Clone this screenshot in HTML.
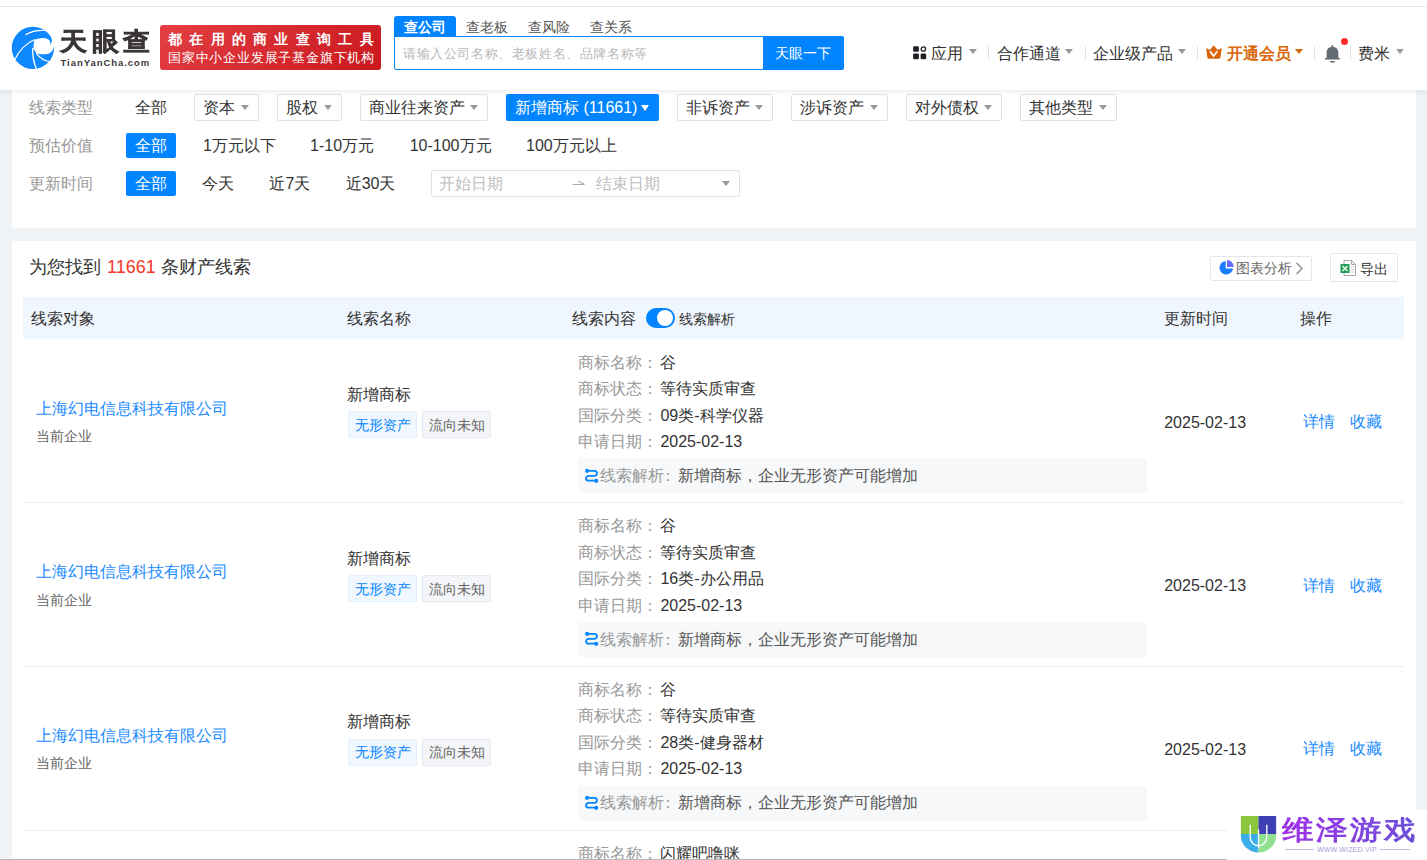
<!DOCTYPE html>
<html><head><meta charset="utf-8"><style>
html,body{margin:0;padding:0;width:1427px;height:860px;overflow:hidden;background:#eff3f6;font-family:"Liberation Sans",sans-serif}
.t{position:absolute;white-space:nowrap}
.r{position:absolute}
</style></head><body>
<div class="r" style="left:0px;top:0px;width:1427px;height:860px;background:#eff3f6"></div>
<div class="r" style="left:12px;top:0px;width:1404px;height:228px;background:#fff"></div>
<div class="r" style="left:12px;top:241px;width:1404px;height:619px;background:#fff"></div>
<div class="t" style="left:28.6px;top:100.3px;font-size:16px;line-height:16px;color:#999;font-weight:normal;">线索类型</div>
<div class="t" style="left:28.6px;top:138.3px;font-size:16px;line-height:16px;color:#999;font-weight:normal;">预估价值</div>
<div class="t" style="left:28.6px;top:176.3px;font-size:16px;line-height:16px;color:#999;font-weight:normal;">更新时间</div>
<div class="t" style="left:134.6px;top:100.3px;font-size:16px;line-height:16px;color:#333;font-weight:normal;">全部</div>
<div class="r" style="left:194px;top:94px;width:65px;height:27px;border:1px solid #dfe3e8;border-radius:2px;box-sizing:border-box;background:#fff"></div>
<div class="t" style="left:203.0px;top:100.3px;font-size:16px;line-height:16px;color:#333;font-weight:normal;">资本</div>
<div class="r" style="left:240.5px;top:105px;width:0;height:0;border-left:4.0px solid transparent;border-right:4.0px solid transparent;border-top:5px solid #999"></div>
<div class="r" style="left:277px;top:94px;width:65px;height:27px;border:1px solid #dfe3e8;border-radius:2px;box-sizing:border-box;background:#fff"></div>
<div class="t" style="left:286.0px;top:100.3px;font-size:16px;line-height:16px;color:#333;font-weight:normal;">股权</div>
<div class="r" style="left:323.5px;top:105px;width:0;height:0;border-left:4.0px solid transparent;border-right:4.0px solid transparent;border-top:5px solid #999"></div>
<div class="r" style="left:360px;top:94px;width:128px;height:27px;border:1px solid #dfe3e8;border-radius:2px;box-sizing:border-box;background:#fff"></div>
<div class="t" style="left:369.0px;top:100.3px;font-size:16px;line-height:16px;color:#333;font-weight:normal;">商业往来资产</div>
<div class="r" style="left:469.5px;top:105px;width:0;height:0;border-left:4.0px solid transparent;border-right:4.0px solid transparent;border-top:5px solid #999"></div>
<div class="r" style="left:506px;top:94px;width:153px;height:27px;background:#0084ff;border-radius:2px"></div>
<div class="t" style="left:515.0px;top:100.3px;font-size:16px;line-height:16px;color:#fff;font-weight:normal;">新增商标 (11661)</div>
<div class="r" style="left:641px;top:105px;width:0;height:0;border-left:4.5px solid transparent;border-right:4.5px solid transparent;border-top:6px solid #fff"></div>
<div class="r" style="left:677px;top:94px;width:96px;height:27px;border:1px solid #dfe3e8;border-radius:2px;box-sizing:border-box;background:#fff"></div>
<div class="t" style="left:686.0px;top:100.3px;font-size:16px;line-height:16px;color:#333;font-weight:normal;">非诉资产</div>
<div class="r" style="left:754.5px;top:105px;width:0;height:0;border-left:4.0px solid transparent;border-right:4.0px solid transparent;border-top:5px solid #999"></div>
<div class="r" style="left:791px;top:94px;width:97px;height:27px;border:1px solid #dfe3e8;border-radius:2px;box-sizing:border-box;background:#fff"></div>
<div class="t" style="left:800.0px;top:100.3px;font-size:16px;line-height:16px;color:#333;font-weight:normal;">涉诉资产</div>
<div class="r" style="left:869.5px;top:105px;width:0;height:0;border-left:4.0px solid transparent;border-right:4.0px solid transparent;border-top:5px solid #999"></div>
<div class="r" style="left:906px;top:94px;width:96px;height:27px;border:1px solid #dfe3e8;border-radius:2px;box-sizing:border-box;background:#fff"></div>
<div class="t" style="left:915.0px;top:100.3px;font-size:16px;line-height:16px;color:#333;font-weight:normal;">对外债权</div>
<div class="r" style="left:983.5px;top:105px;width:0;height:0;border-left:4.0px solid transparent;border-right:4.0px solid transparent;border-top:5px solid #999"></div>
<div class="r" style="left:1020px;top:94px;width:97px;height:27px;border:1px solid #dfe3e8;border-radius:2px;box-sizing:border-box;background:#fff"></div>
<div class="t" style="left:1029.0px;top:100.3px;font-size:16px;line-height:16px;color:#333;font-weight:normal;">其他类型</div>
<div class="r" style="left:1098.5px;top:105px;width:0;height:0;border-left:4.0px solid transparent;border-right:4.0px solid transparent;border-top:5px solid #999"></div>
<div class="r" style="left:126px;top:133px;width:50px;height:25px;background:#0084ff;border-radius:2px"></div>
<div class="t" style="left:134.6px;top:138.3px;font-size:16px;line-height:16px;color:#fff;font-weight:normal;">全部</div>
<div class="t" style="left:203.0px;top:138.3px;font-size:16px;line-height:16px;color:#333;font-weight:normal;">1万元以下</div>
<div class="t" style="left:310.0px;top:138.3px;font-size:16px;line-height:16px;color:#333;font-weight:normal;">1-10万元</div>
<div class="t" style="left:409.7px;top:138.3px;font-size:16px;line-height:16px;color:#333;font-weight:normal;">10-100万元</div>
<div class="t" style="left:526.0px;top:138.3px;font-size:16px;line-height:16px;color:#333;font-weight:normal;">100万元以上</div>
<div class="r" style="left:126px;top:171px;width:50px;height:25px;background:#0084ff;border-radius:2px"></div>
<div class="t" style="left:134.6px;top:176.3px;font-size:16px;line-height:16px;color:#fff;font-weight:normal;">全部</div>
<div class="t" style="left:202.0px;top:176.3px;font-size:16px;line-height:16px;color:#333;font-weight:normal;">今天</div>
<div class="t" style="left:269.4px;top:176.3px;font-size:16px;line-height:16px;color:#333;font-weight:normal;">近7天</div>
<div class="t" style="left:345.7px;top:176.3px;font-size:16px;line-height:16px;color:#333;font-weight:normal;">近30天</div>
<div class="r" style="left:431px;top:170px;width:309px;height:27px;border:1px solid #dfe3e8;border-radius:2px;box-sizing:border-box;background:#fff"></div>
<div class="t" style="left:438.6px;top:176.3px;font-size:16px;line-height:16px;color:#c0c0c0;font-weight:normal;">开始日期</div>
<div class="t" style="left:595.8px;top:176.3px;font-size:16px;line-height:16px;color:#c0c0c0;font-weight:normal;">结束日期</div>
<svg class="r" style="left:571px;top:180px" width="16" height="8" viewBox="0 0 16 8"><path d="M1.5 4.5H13.5L7.5 1.3" fill="none" stroke="#aaa" stroke-width="1.2"/></svg>
<div class="r" style="left:722px;top:181px;width:0;height:0;border-left:4.5px solid transparent;border-right:4.5px solid transparent;border-top:5px solid #999"></div>
<div class="t" style="left:28.7px;top:258.3px;font-size:18px;line-height:18px;color:#333;font-weight:normal;">为您找到</div>
<div class="t" style="left:107.0px;top:258.3px;font-size:18px;line-height:18px;color:#f5362b;font-weight:normal;">11661</div>
<div class="t" style="left:161.4px;top:258.3px;font-size:18px;line-height:18px;color:#333;font-weight:normal;">条财产线索</div>
<div class="r" style="left:1210px;top:256px;width:102px;height:25px;border:1px solid #e3e6eb;border-radius:2px;box-sizing:border-box"></div>
<svg class="r" style="left:1219px;top:260px" width="15" height="15" viewBox="0 0 15 15"><path d="M6.6 1A6.8 6.8 0 1 0 14 8.4H6.6Z" fill="#1a7cff"/><path d="M8 0V6.9H14.6A6.6 6.6 0 0 0 8 0Z" fill="#6b6bff"/></svg>
<div class="t" style="left:1235.5px;top:261.3px;font-size:14px;line-height:14px;color:#666;font-weight:normal;">图表分析</div>
<svg class="r" style="left:1295px;top:262px" width="9" height="13" viewBox="0 0 9 13"><path d="M1.5 1L7 6.5L1.5 12" fill="none" stroke="#888" stroke-width="1.3"/></svg>
<div class="r" style="left:1330px;top:253px;width:68px;height:29px;border:1px solid #e3e6eb;border-radius:2px;box-sizing:border-box"></div>
<svg class="r" style="left:1340px;top:259px" width="17" height="18" viewBox="0 0 17 18"><path d="M4 1.5H11.5L15.5 5.5V16.5H4Z" fill="#fff" stroke="#aaa" stroke-width="1"/><path d="M11.5 1.5V5.5H15.5" fill="none" stroke="#aaa"/><rect x="0.5" y="5" width="9" height="9" fill="#1f9d55"/><path d="M2.5 7L7.5 12M7.5 7L2.5 12" stroke="#fff" stroke-width="1.3"/><path d="M11 8H14M11 10.5H14M11 13H14" stroke="#bbb" stroke-width="0.8"/></svg>
<div class="t" style="left:1359.8px;top:261.8px;font-size:14px;line-height:14px;color:#333;font-weight:normal;">导出</div>
<div class="r" style="left:23px;top:297px;width:1381px;height:42px;background:#eff6fd"></div>
<div class="t" style="left:30.7px;top:310.8px;font-size:16px;line-height:16px;color:#333;font-weight:normal;">线索对象</div>
<div class="t" style="left:347.0px;top:310.8px;font-size:16px;line-height:16px;color:#333;font-weight:normal;">线索名称</div>
<div class="t" style="left:572.4px;top:310.8px;font-size:16px;line-height:16px;color:#333;font-weight:normal;">线索内容</div>
<div class="r" style="left:646px;top:308px;width:29px;height:20px;background:#0084ff;border-radius:10px"></div>
<div class="r" style="left:657px;top:310px;width:16px;height:16px;background:#fff;border-radius:50%"></div>
<div class="t" style="left:679.3px;top:311.8px;font-size:14px;line-height:14px;color:#333;font-weight:normal;">线索解析</div>
<div class="t" style="left:1164.4px;top:310.8px;font-size:16px;line-height:16px;color:#333;font-weight:normal;">更新时间</div>
<div class="t" style="left:1299.7px;top:310.8px;font-size:16px;line-height:16px;color:#333;font-weight:normal;">操作</div>
<div class="r" style="left:23px;top:502px;width:1381px;height:1px;background:#e6eef6"></div>
<div class="t" style="left:35.9px;top:400.8px;font-size:16px;line-height:16px;color:#1a8cff;font-weight:normal;">上海幻电信息科技有限公司</div>
<div class="t" style="left:35.9px;top:429.1px;font-size:14px;line-height:14px;color:#666;font-weight:normal;">当前企业</div>
<div class="t" style="left:346.8px;top:387.3px;font-size:16px;line-height:16px;color:#333;font-weight:normal;">新增商标</div>
<div class="r" style="left:348px;top:411px;width:69px;height:26.5px;background:#f0f7ff;border:1px solid #e3f0ff;border-radius:2px;box-sizing:border-box"></div>
<div class="t" style="left:354.9px;top:418.3px;font-size:14px;line-height:14px;color:#0084ff;font-weight:normal;">无形资产</div>
<div class="r" style="left:422px;top:411px;width:69px;height:26.5px;background:#f3f5f8;border:1px solid #e6e9ee;border-radius:2px;box-sizing:border-box"></div>
<div class="t" style="left:428.9px;top:418.3px;font-size:14px;line-height:14px;color:#666;font-weight:normal;">流向未知</div>
<div class="t" style="left:577.9px;top:354.8px;font-size:16px;line-height:16px;color:#999;font-weight:normal;">商标名称：</div>
<div class="t" style="left:660.4px;top:354.8px;font-size:16px;line-height:16px;color:#333;font-weight:normal;">谷</div>
<div class="t" style="left:577.9px;top:381.3px;font-size:16px;line-height:16px;color:#999;font-weight:normal;">商标状态：</div>
<div class="t" style="left:660.4px;top:381.3px;font-size:16px;line-height:16px;color:#333;font-weight:normal;">等待实质审查</div>
<div class="t" style="left:577.9px;top:407.8px;font-size:16px;line-height:16px;color:#999;font-weight:normal;">国际分类：</div>
<div class="t" style="left:660.4px;top:407.8px;font-size:16px;line-height:16px;color:#333;font-weight:normal;">09类-科学仪器</div>
<div class="t" style="left:577.9px;top:434.3px;font-size:16px;line-height:16px;color:#999;font-weight:normal;">申请日期：</div>
<div class="t" style="left:660.4px;top:434.3px;font-size:16px;line-height:16px;color:#333;font-weight:normal;">2025-02-13</div>
<div class="r" style="left:578px;top:458px;width:569px;height:35px;background:#f6f8fa;border-radius:4px"></div>
<svg class="r" style="left:584px;top:468.0px" width="15" height="16" viewBox="0 0 15 16"><path d="M3 2.9H10.5A2.45 2.45 0 0 1 10.5 7.8H4.5A2.45 2.45 0 0 0 4.5 12.7H12.2" fill="none" stroke="#0084ff" stroke-width="1.8"/><circle cx="3.1" cy="2.8" r="2.1" fill="#0084ff"/><circle cx="12.2" cy="12.8" r="2.1" fill="#0084ff"/></svg>
<div class="t" style="left:599.6px;top:468.3px;font-size:16px;line-height:16px;color:#999;font-weight:normal;">线索解析</div>
<div class="t" style="left:659.6px;top:468.3px;font-size:16px;line-height:16px;color:#999;font-weight:normal;">：</div>
<div class="t" style="left:678.2px;top:468.3px;font-size:16px;line-height:16px;color:#555;font-weight:normal;">新增商标，企业无形资产可能增加</div>
<div class="t" style="left:1164.2px;top:414.8px;font-size:16px;line-height:16px;color:#333;font-weight:normal;">2025-02-13</div>
<div class="t" style="left:1303.2px;top:414.3px;font-size:16px;line-height:16px;color:#1a8cff;font-weight:normal;">详情</div>
<div class="t" style="left:1350.0px;top:414.3px;font-size:16px;line-height:16px;color:#1a8cff;font-weight:normal;">收藏</div>
<div class="r" style="left:23px;top:666px;width:1381px;height:1px;background:#e6eef6"></div>
<div class="t" style="left:35.9px;top:564.2px;font-size:16px;line-height:16px;color:#1a8cff;font-weight:normal;">上海幻电信息科技有限公司</div>
<div class="t" style="left:35.9px;top:592.5px;font-size:14px;line-height:14px;color:#666;font-weight:normal;">当前企业</div>
<div class="t" style="left:346.8px;top:550.8px;font-size:16px;line-height:16px;color:#333;font-weight:normal;">新增商标</div>
<div class="r" style="left:348px;top:575px;width:69px;height:26.5px;background:#f0f7ff;border:1px solid #e3f0ff;border-radius:2px;box-sizing:border-box"></div>
<div class="t" style="left:354.9px;top:581.8px;font-size:14px;line-height:14px;color:#0084ff;font-weight:normal;">无形资产</div>
<div class="r" style="left:422px;top:575px;width:69px;height:26.5px;background:#f3f5f8;border:1px solid #e6e9ee;border-radius:2px;box-sizing:border-box"></div>
<div class="t" style="left:428.9px;top:581.8px;font-size:14px;line-height:14px;color:#666;font-weight:normal;">流向未知</div>
<div class="t" style="left:577.9px;top:518.2px;font-size:16px;line-height:16px;color:#999;font-weight:normal;">商标名称：</div>
<div class="t" style="left:660.4px;top:518.2px;font-size:16px;line-height:16px;color:#333;font-weight:normal;">谷</div>
<div class="t" style="left:577.9px;top:544.8px;font-size:16px;line-height:16px;color:#999;font-weight:normal;">商标状态：</div>
<div class="t" style="left:660.4px;top:544.8px;font-size:16px;line-height:16px;color:#333;font-weight:normal;">等待实质审查</div>
<div class="t" style="left:577.9px;top:571.2px;font-size:16px;line-height:16px;color:#999;font-weight:normal;">国际分类：</div>
<div class="t" style="left:660.4px;top:571.2px;font-size:16px;line-height:16px;color:#333;font-weight:normal;">16类-办公用品</div>
<div class="t" style="left:577.9px;top:597.8px;font-size:16px;line-height:16px;color:#999;font-weight:normal;">申请日期：</div>
<div class="t" style="left:660.4px;top:597.8px;font-size:16px;line-height:16px;color:#333;font-weight:normal;">2025-02-13</div>
<div class="r" style="left:578px;top:622px;width:569px;height:35px;background:#f6f8fa;border-radius:4px"></div>
<svg class="r" style="left:584px;top:631.45px" width="15" height="16" viewBox="0 0 15 16"><path d="M3 2.9H10.5A2.45 2.45 0 0 1 10.5 7.8H4.5A2.45 2.45 0 0 0 4.5 12.7H12.2" fill="none" stroke="#0084ff" stroke-width="1.8"/><circle cx="3.1" cy="2.8" r="2.1" fill="#0084ff"/><circle cx="12.2" cy="12.8" r="2.1" fill="#0084ff"/></svg>
<div class="t" style="left:599.6px;top:631.8px;font-size:16px;line-height:16px;color:#999;font-weight:normal;">线索解析</div>
<div class="t" style="left:659.6px;top:631.8px;font-size:16px;line-height:16px;color:#999;font-weight:normal;">：</div>
<div class="t" style="left:678.2px;top:631.8px;font-size:16px;line-height:16px;color:#555;font-weight:normal;">新增商标，企业无形资产可能增加</div>
<div class="t" style="left:1164.2px;top:578.2px;font-size:16px;line-height:16px;color:#333;font-weight:normal;">2025-02-13</div>
<div class="t" style="left:1303.2px;top:577.8px;font-size:16px;line-height:16px;color:#1a8cff;font-weight:normal;">详情</div>
<div class="t" style="left:1350.0px;top:577.8px;font-size:16px;line-height:16px;color:#1a8cff;font-weight:normal;">收藏</div>
<div class="r" style="left:23px;top:830px;width:1381px;height:1px;background:#e6eef6"></div>
<div class="t" style="left:35.9px;top:727.7px;font-size:16px;line-height:16px;color:#1a8cff;font-weight:normal;">上海幻电信息科技有限公司</div>
<div class="t" style="left:35.9px;top:756.0px;font-size:14px;line-height:14px;color:#666;font-weight:normal;">当前企业</div>
<div class="t" style="left:346.8px;top:714.2px;font-size:16px;line-height:16px;color:#333;font-weight:normal;">新增商标</div>
<div class="r" style="left:348px;top:739px;width:69px;height:26.5px;background:#f0f7ff;border:1px solid #e3f0ff;border-radius:2px;box-sizing:border-box"></div>
<div class="t" style="left:354.9px;top:745.2px;font-size:14px;line-height:14px;color:#0084ff;font-weight:normal;">无形资产</div>
<div class="r" style="left:422px;top:739px;width:69px;height:26.5px;background:#f3f5f8;border:1px solid #e6e9ee;border-radius:2px;box-sizing:border-box"></div>
<div class="t" style="left:428.9px;top:745.2px;font-size:14px;line-height:14px;color:#666;font-weight:normal;">流向未知</div>
<div class="t" style="left:577.9px;top:681.7px;font-size:16px;line-height:16px;color:#999;font-weight:normal;">商标名称：</div>
<div class="t" style="left:660.4px;top:681.7px;font-size:16px;line-height:16px;color:#333;font-weight:normal;">谷</div>
<div class="t" style="left:577.9px;top:708.2px;font-size:16px;line-height:16px;color:#999;font-weight:normal;">商标状态：</div>
<div class="t" style="left:660.4px;top:708.2px;font-size:16px;line-height:16px;color:#333;font-weight:normal;">等待实质审查</div>
<div class="t" style="left:577.9px;top:734.7px;font-size:16px;line-height:16px;color:#999;font-weight:normal;">国际分类：</div>
<div class="t" style="left:660.4px;top:734.7px;font-size:16px;line-height:16px;color:#333;font-weight:normal;">28类-健身器材</div>
<div class="t" style="left:577.9px;top:761.2px;font-size:16px;line-height:16px;color:#999;font-weight:normal;">申请日期：</div>
<div class="t" style="left:660.4px;top:761.2px;font-size:16px;line-height:16px;color:#333;font-weight:normal;">2025-02-13</div>
<div class="r" style="left:578px;top:786px;width:569px;height:35px;background:#f6f8fa;border-radius:4px"></div>
<svg class="r" style="left:584px;top:794.9px" width="15" height="16" viewBox="0 0 15 16"><path d="M3 2.9H10.5A2.45 2.45 0 0 1 10.5 7.8H4.5A2.45 2.45 0 0 0 4.5 12.7H12.2" fill="none" stroke="#0084ff" stroke-width="1.8"/><circle cx="3.1" cy="2.8" r="2.1" fill="#0084ff"/><circle cx="12.2" cy="12.8" r="2.1" fill="#0084ff"/></svg>
<div class="t" style="left:599.6px;top:795.2px;font-size:16px;line-height:16px;color:#999;font-weight:normal;">线索解析</div>
<div class="t" style="left:659.6px;top:795.2px;font-size:16px;line-height:16px;color:#999;font-weight:normal;">：</div>
<div class="t" style="left:678.2px;top:795.2px;font-size:16px;line-height:16px;color:#555;font-weight:normal;">新增商标，企业无形资产可能增加</div>
<div class="t" style="left:1164.2px;top:741.7px;font-size:16px;line-height:16px;color:#333;font-weight:normal;">2025-02-13</div>
<div class="t" style="left:1303.2px;top:741.2px;font-size:16px;line-height:16px;color:#1a8cff;font-weight:normal;">详情</div>
<div class="t" style="left:1350.0px;top:741.2px;font-size:16px;line-height:16px;color:#1a8cff;font-weight:normal;">收藏</div>
<div class="t" style="left:577.9px;top:846.3px;font-size:16px;line-height:16px;color:#999;font-weight:normal;">商标名称：</div>
<div class="t" style="left:660.4px;top:846.3px;font-size:16px;line-height:16px;color:#333;font-weight:normal;">闪耀吧噜咪</div>
<div class="r" style="left:0px;top:859px;width:1427px;height:1px;background:#b8b8b8"></div>
<div class="r" style="left:0px;top:0px;width:1427px;height:90px;background:#fff;box-shadow:0 1px 6px rgba(0,0,0,0.09)"></div>
<div class="r" style="left:0px;top:6px;width:1427px;height:1px;background:#e6e6e6"></div>
<svg class="r" style="left:8px;top:22px" width="52" height="52" viewBox="0 0 860 860">
<circle cx="412" cy="428" r="350" fill="#0f87ff"/>
<path d="M290 212 Q430 130 610 140" fill="none" stroke="#fff" stroke-width="18"/>
<path d="M598 128 Q742 190 724 322 Q716 356 690 374 L770 402 L860 402 L860 60 Z" fill="#fff"/>
<path d="M110 625 Q230 380 445 290" fill="none" stroke="#fff" stroke-width="20"/>
<path d="M440 292 Q580 240 670 290 Q715 330 688 372 Q740 370 765 400 Q730 530 620 535 Q520 538 470 515 Q430 470 420 430 Q420 340 440 292 Z" fill="#fff"/>
<path d="M410 430 Q395 600 475 790" fill="none" stroke="#fff" stroke-width="22"/>
<path d="M465 515 Q560 640 690 655" fill="none" stroke="#fff" stroke-width="20"/>
</svg>
<div class="t" style="left:60.2px;top:29.3px;font-size:25px;line-height:25px;color:#3b3636;font-weight:900;letter-spacing:4.2px;transform:scaleX(1.08);transform-origin:0 0;-webkit-text-stroke:0.6px #3b3636">天眼查</div>
<div class="t" style="left:60.5px;top:57.5px;font-size:9.5px;line-height:10px;color:#3d3939;font-weight:bold;letter-spacing:0.95px">TianYanCha.com</div>
<div class="r" style="left:160px;top:25px;width:221px;height:45px;background:linear-gradient(135deg,#e43f43,#c9181e);border-radius:3px"></div>
<div class="t" style="left:168.0px;top:31.8px;font-size:14px;line-height:14px;color:#fff;font-weight:bold;letter-spacing:7.3px">都在用的商业查询工具</div>
<div class="t" style="left:168.0px;top:50.8px;font-size:13px;line-height:13px;color:#fff;font-weight:normal;letter-spacing:0.8px">国家中小企业发展子基金旗下机构</div>
<div class="r" style="left:394px;top:16px;width:62px;height:21px;background:#0084ff;border-radius:3px 3px 0 0"></div>
<div class="t" style="left:403.7px;top:20.0px;font-size:14px;line-height:14px;color:#fff;font-weight:bold;">查公司</div>
<div class="t" style="left:465.6px;top:20.0px;font-size:14px;line-height:14px;color:#555;font-weight:normal;">查老板</div>
<div class="t" style="left:528.0px;top:20.0px;font-size:14px;line-height:14px;color:#555;font-weight:normal;">查风险</div>
<div class="t" style="left:589.5px;top:20.0px;font-size:14px;line-height:14px;color:#555;font-weight:normal;">查关系</div>
<div class="r" style="left:394px;top:36px;width:450px;height:34px;border:1px solid #0084ff;border-radius:0 2px 2px 2px;box-sizing:border-box;background:#fff"></div>
<div class="t" style="left:403.0px;top:47.3px;font-size:13px;line-height:13px;color:#b8b8b8;font-weight:normal;letter-spacing:0.6px">请输入公司名称、老板姓名、品牌名称等</div>
<div class="r" style="left:763px;top:36px;width:81px;height:34px;background:#0084ff;border-radius:0 3px 3px 0"></div>
<div class="t" style="left:775.3px;top:46.3px;font-size:14px;line-height:14px;color:#fff;font-weight:normal;">天眼一下</div>
<svg class="r" style="left:913px;top:46px" width="14" height="14" viewBox="0 0 14 14"><rect x="0.1" y="0.2" width="5.8" height="5.6" rx="1.3" fill="#1e2226"/><rect x="0.1" y="7.5" width="5.8" height="5.8" rx="1.3" fill="#1e2226"/><rect x="7.6" y="7.5" width="5.6" height="5.8" rx="1.3" fill="#1e2226"/><circle cx="10.4" cy="3" r="2.2" fill="none" stroke="#1e2226" stroke-width="1.3"/></svg>
<div class="t" style="left:931.4px;top:45.8px;font-size:16px;line-height:16px;color:#333;font-weight:normal;">应用</div>
<div class="r" style="left:968.9px;top:49px;width:0;height:0;border-left:4.0px solid transparent;border-right:4.0px solid transparent;border-top:5px solid #999"></div>
<div class="r" style="left:988px;top:46px;width:1px;height:14px;background:#e3e3e3"></div>
<div class="t" style="left:996.5px;top:45.8px;font-size:16px;line-height:16px;color:#333;font-weight:normal;">合作通道</div>
<div class="r" style="left:1065.4px;top:49px;width:0;height:0;border-left:4.0px solid transparent;border-right:4.0px solid transparent;border-top:5px solid #999"></div>
<div class="r" style="left:1085px;top:46px;width:1px;height:14px;background:#e3e3e3"></div>
<div class="t" style="left:1093.0px;top:45.8px;font-size:16px;line-height:16px;color:#333;font-weight:normal;">企业级产品</div>
<div class="r" style="left:1178px;top:49px;width:0;height:0;border-left:4.0px solid transparent;border-right:4.0px solid transparent;border-top:5px solid #999"></div>
<div class="r" style="left:1197px;top:46px;width:1px;height:14px;background:#e3e3e3"></div>
<svg class="r" style="left:1206px;top:45px" width="16" height="15" viewBox="0 0 16 15"><path d="M0.2 3L4 4.9L7.6 0.2L11.6 4.9L15.8 3L14.5 12.3Q14.3 13.8 12.9 13.8H2.9Q1.5 13.8 1.3 12.3Z" fill="#d9650a"/><path d="M4.1 6.3L7.6 11L11.3 6.3" fill="none" stroke="#fff" stroke-width="1.7"/></svg>
<div class="t" style="left:1227.0px;top:45.8px;font-size:16px;line-height:16px;color:#d9680a;font-weight:bold;">开通会员</div>
<div class="r" style="left:1295px;top:49px;width:0;height:0;border-left:4.0px solid transparent;border-right:4.0px solid transparent;border-top:5px solid #d9680a"></div>
<div class="r" style="left:1314px;top:46px;width:1px;height:14px;background:#e3e3e3"></div>
<svg class="r" style="left:1324px;top:44px" width="17" height="19" viewBox="0 0 17 19"><rect x="7.7" y="1" width="1.4" height="2.5" fill="#636b75"/><path d="M2.6 14V8.5C2.6 5 5 2.7 8.4 2.7C11.8 2.7 14.3 5 14.3 8.5V14Z" fill="#636b75"/><rect x="0.9" y="14" width="15" height="1.6" rx="0.6" fill="#636b75"/><rect x="6.1" y="17.1" width="4.7" height="1.5" rx="0.5" fill="#636b75"/></svg>
<div class="r" style="left:1341px;top:38px;width:7px;height:7px;background:#ff3030;border-radius:50%"></div>
<div class="r" style="left:1350px;top:46px;width:1px;height:14px;background:#e3e3e3"></div>
<div class="t" style="left:1358.0px;top:45.8px;font-size:16px;line-height:16px;color:#333;font-weight:normal;">费米</div>
<div class="r" style="left:1396px;top:49px;width:0;height:0;border-left:4.0px solid transparent;border-right:4.0px solid transparent;border-top:5px solid #999"></div>
<div class="r" style="left:1227px;top:810px;width:200px;height:50px;background:#fff"></div>
<svg class="r" style="left:1240px;top:816px" width="37" height="37" viewBox="0 0 37 38">
<defs><clipPath id="sh"><path d="M0 0H37V19A18.5 18.5 0 0 1 0 19Z"/></clipPath></defs>
<g clip-path="url(#sh)"><rect x="0" y="0" width="18.5" height="18.5" fill="#8cc63f"/><rect x="18.5" y="0" width="18.5" height="18.5" fill="#3f3fb5"/><rect x="0" y="18.5" width="18.5" height="20" fill="#3badea"/><rect x="18.5" y="18.5" width="18.5" height="20" fill="#8fe08f"/></g>
<path d="M10 9V22A8.5 8.5 0 0 0 27 22V9" fill="none" stroke="#fff" stroke-width="1.4"/><path d="M18.5 14V33" stroke="#fff" stroke-width="1.4"/>
</svg>
<div class="t" style="left:1282px;top:816.7px;font-size:27px;line-height:27px;font-weight:bold;letter-spacing:2.2px;transform:scaleX(1.17);transform-origin:0 0;background:linear-gradient(90deg,#a030e8,#6a52d8);-webkit-background-clip:text;color:transparent">维泽游戏</div>
<div class="r" style="left:1285px;top:849px;width:29px;height:1px;background:#c9b8ee"></div>
<div class="r" style="left:1380px;top:849px;width:30px;height:1px;background:#c9b8ee"></div>
<div class="t" style="left:1317px;top:845.5px;font-size:7px;line-height:7px;color:#a89ad8;letter-spacing:0.2px">WWW.WIZED.VIP</div>
</body></html>
